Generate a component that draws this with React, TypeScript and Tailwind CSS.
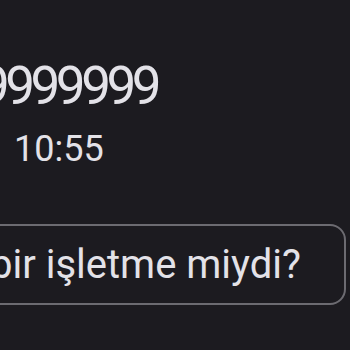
import React from 'react';

export default function App() {
  return (
    <div className="w-[350px] h-[350px] bg-[#1c1b20] overflow-hidden text-[#e3e2e8] font-['Roboto',sans-serif]">
      <div className="flex flex-col pt-[56px]">
        <div className="ml-[-20px] text-[53px] leading-[60px] tracking-[-4.5px] whitespace-nowrap">9999999</div>
        <div className="ml-[14px] mt-[11px] text-[36px] leading-[44px] whitespace-nowrap">10:55</div>
        <div className="ml-[-24px] mt-[53px] w-[370px] h-[81px] border-2 border-[#6c6b71] rounded-[16px] flex items-center pl-[12px]">
          <span className="text-[40px] whitespace-nowrap">bir işletme miydi?</span>
        </div>
      </div>
    </div>
  );
}
